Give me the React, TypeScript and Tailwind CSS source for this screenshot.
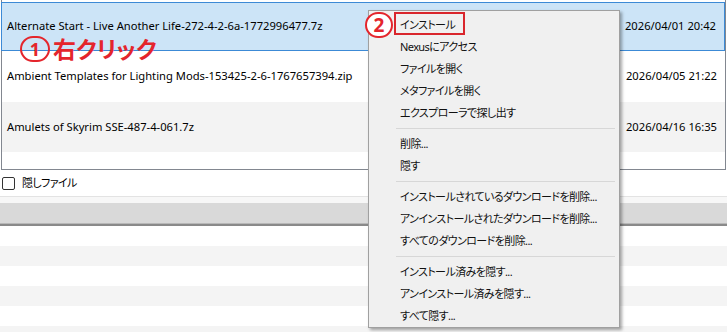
import React from "react";

type FileRow = {
  name: string;
  date: string;
  selected?: boolean;
  alt?: boolean;
};

const files: FileRow[] = [
  {
    name: "Alternate Start - Live Another Life-272-4-2-6a-1772996477.7z",
    date: "2026/04/01 20:42",
    selected: true,
  },
  {
    name: "Ambient Templates for Lighting Mods-153425-2-6-1767657394.zip",
    date: "2026/04/05 21:22",
  },
  {
    name: "Amulets of Skyrim SSE-487-4-061.7z",
    date: "2026/04/16 16:35",
    alt: true,
  },
];

const menuGroups: string[][] = [
  ["インストール", "Nexusにアクセス", "ファイルを開く", "メタファイルを開く", "エクスプローラで探し出す"],
  ["削除...", "隠す"],
  [
    "インストールされているダウンロードを削除...",
    "アンインストールされたダウンロードを削除...",
    "すべてのダウンロードを削除...",
  ],
  ["インストール済みを隠す...", "アンインストール済みを隠す...", "すべて隠す..."],
];

function ContextMenu() {
  return (
    <div className="absolute left-[368px] top-[10px] w-[252px] h-[318px] bg-[#f0f0f0] border border-[#a0a0a0] shadow-[2px_2px_3px_rgba(0,0,0,0.35)] py-[3px]">
      {menuGroups.map((group, gi) => (
        <div key={gi}>
          {gi > 0 && (
            <div className="h-[9px] flex items-center pl-[27px] pr-[4px]">
              <div className="h-px w-full bg-[#d7d7d7]" />
            </div>
          )}
          {group.map((label) => (
            <div
              key={label}
              className="h-[22px] flex items-center pl-[31px] text-[11px] tracking-[-0.6px] text-[#111] whitespace-nowrap"
            >
              {label}
            </div>
          ))}
        </div>
      ))}
    </div>
  );
}

export default function App() {
  return (
    <div className="relative w-[727px] h-[332px] overflow-hidden bg-white text-black font-['Noto_Sans','Noto_Sans_CJK_JP',sans-serif] [font-feature-settings:'palt']">
      {/* ===== download list ===== */}
      <div className="ml-[1px] w-[725px] h-[170px] border-l border-r border-b border-[#828790] pt-[2px]">
        {files.map((f, i) => (
          <div
            key={f.name}
            className={`flex items-center justify-between text-[11.2px] pl-[5px] pr-[8px] whitespace-nowrap ${
              i === 0 ? "h-[49px]" : i === 1 ? "h-[51px]" : "h-[50px]"
            } ${
              f.selected
                ? "bg-[#cce4f7] border border-[#3c8ad6] -ml-[1px]"
                : f.alt
                ? "bg-[#f3f3f3]"
                : "bg-white"
            }`}
          >
            <span>{f.name}</span>
            <span className="whitespace-pre">{"...  " + f.date}</span>
          </div>
        ))}
      </div>

      {/* ===== hidden files checkbox ===== */}
      <div className="h-[26px] flex items-center pl-[2px] text-[11px] tracking-[-0.6px]">
        <div className="w-[13px] h-[13px] border border-[#333] rounded-[2px] bg-white" />
        <span className="ml-[7px]">隠しファイル</span>
      </div>
      <div className="h-[7px] border-t border-[#e3e3e3] bg-[#f7f7f7]" />

      {/* ===== lower table ===== */}
      <div className="h-[20px] bg-[#d9d9d9]" />
      <div className="h-[3px] border-t border-[#b8b8b8] border-b-2 border-b-[#8a8a8a] bg-[#d9d9d9]" />
      {[0, 1, 2, 3, 4, 5].map((n) => (
        <div key={n} className={`h-[20px] ${n % 2 === 0 ? "bg-white" : "bg-[#f4f4f4]"}`} />
      ))}

      <ContextMenu />

      {/* ===== annotations ===== */}
      <div className="absolute left-[20px] top-[36px] flex items-center text-[#e4252c] font-bold">
        <div className="w-[30px] h-[26px] rounded-full border-[2.5px] border-[#e4252c] flex items-center justify-center text-[18px] leading-none">
          1
        </div>
        <span className="ml-[3px] text-[23px] leading-none">右クリック</span>
      </div>
      <div className="absolute left-[365px] top-[12px] w-[28px] h-[26px] rounded-full border-[2.5px] border-[#e4252c] bg-white flex items-center justify-center text-[19px] font-bold text-[#e4252c] leading-none">
        2
      </div>
      <div className="absolute left-[394px] top-[12px] w-[71px] h-[23px] border-2 border-[#d9262c]" />
    </div>
  );
}
